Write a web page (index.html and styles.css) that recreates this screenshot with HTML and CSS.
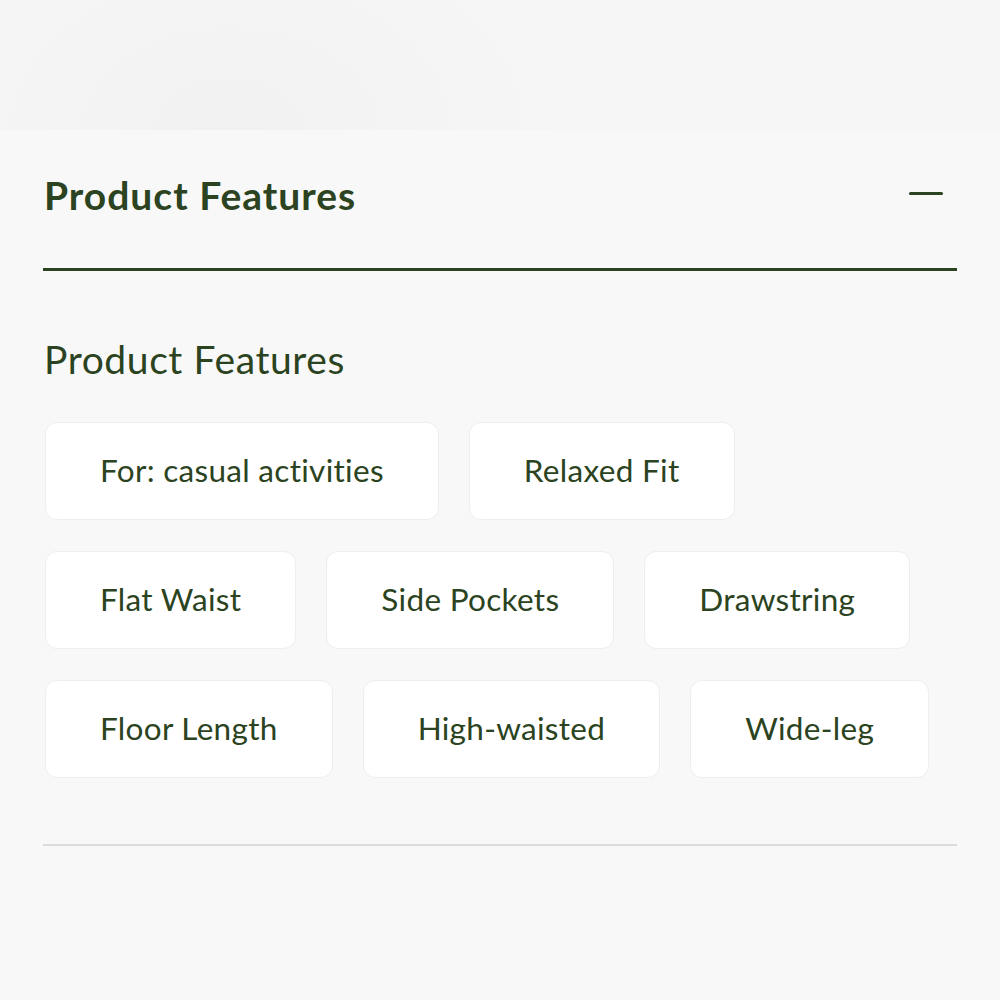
FILE: index.html
```
<!DOCTYPE html>
<html>
<head>
<meta charset="utf-8">
<link rel="stylesheet" href="styles.css">
</head>
<body>
<div class="hero"></div>
<section class="accordion">
  <div class="acc-head">
    <h2 class="acc-title">Product Features</h2>
    <span class="acc-toggle" aria-hidden="true"></span>
  </div>
  <div class="acc-body">
    <h3 class="sub-title">Product Features</h3>
    <div class="chips">
      <div class="chip-row">
        <span class="chip">For: casual activities</span>
        <span class="chip">Relaxed Fit</span>
      </div>
      <div class="chip-row">
        <span class="chip">Flat Waist</span>
        <span class="chip">Side Pockets</span>
        <span class="chip">Drawstring</span>
      </div>
      <div class="chip-row">
        <span class="chip">Floor Length</span>
        <span class="chip">High-waisted</span>
        <span class="chip">Wide-leg</span>
      </div>
    </div>
  </div>
  <div class="divider"></div>
</section>
<div class="footer-space"></div>
</body>
</html>
```
FILE: styles.css
```
html, body {
  margin: 0;
  padding: 0;
  background: #f8f8f8;
  font-family: "Lato", "Liberation Sans", sans-serif;
  color: #2b4321;
}
.hero {
  height: 130px;
  background: radial-gradient(ellipse 320px 220px at 230px 130px, #f1f1f1, #f4f4f4 60%, #f6f6f6);
}
.accordion {
  padding: 0 43px;
}
.acc-head {
  height: 138px;
  display: flex;
  align-items: center;
  justify-content: space-between;
  border-bottom: 3px solid #2b4321;
}
.acc-title {
  margin: 0 0 8px 1px;
  font-size: 39px;
  font-weight: 700;
  letter-spacing: 1px;
}
.acc-toggle {
  width: 34px;
  height: 3px;
  border-radius: 2px;
  background: #2b4321;
  margin-right: 14px;
  margin-bottom: 11px;
}
.acc-body {
  padding-top: 66px;
}
.sub-title {
  margin: 0 0 41px 1px;
  font-size: 39px;
  font-weight: 400;
  line-height: 44px;
  letter-spacing: 0.6px;
}
.chips {
  display: flex;
  flex-direction: column;
  gap: 31px;
  padding-left: 2px;
}
.chip-row {
  display: flex;
  gap: 30px;
}
.chip {
  height: 96px;
  padding: 0 54px 3px;
  box-sizing: content-box;
  height: 93px;
  display: flex;
  align-items: center;
  background: #ffffff;
  border: 1px solid #eeeeee;
  border-radius: 12px;
  font-size: 31.5px;
  letter-spacing: 0.3px;
}
.divider {
  margin-top: 66px;
  height: 2px;
  background: #dcdcdc;
}
.footer-space {
  height: 150px;
}
```
